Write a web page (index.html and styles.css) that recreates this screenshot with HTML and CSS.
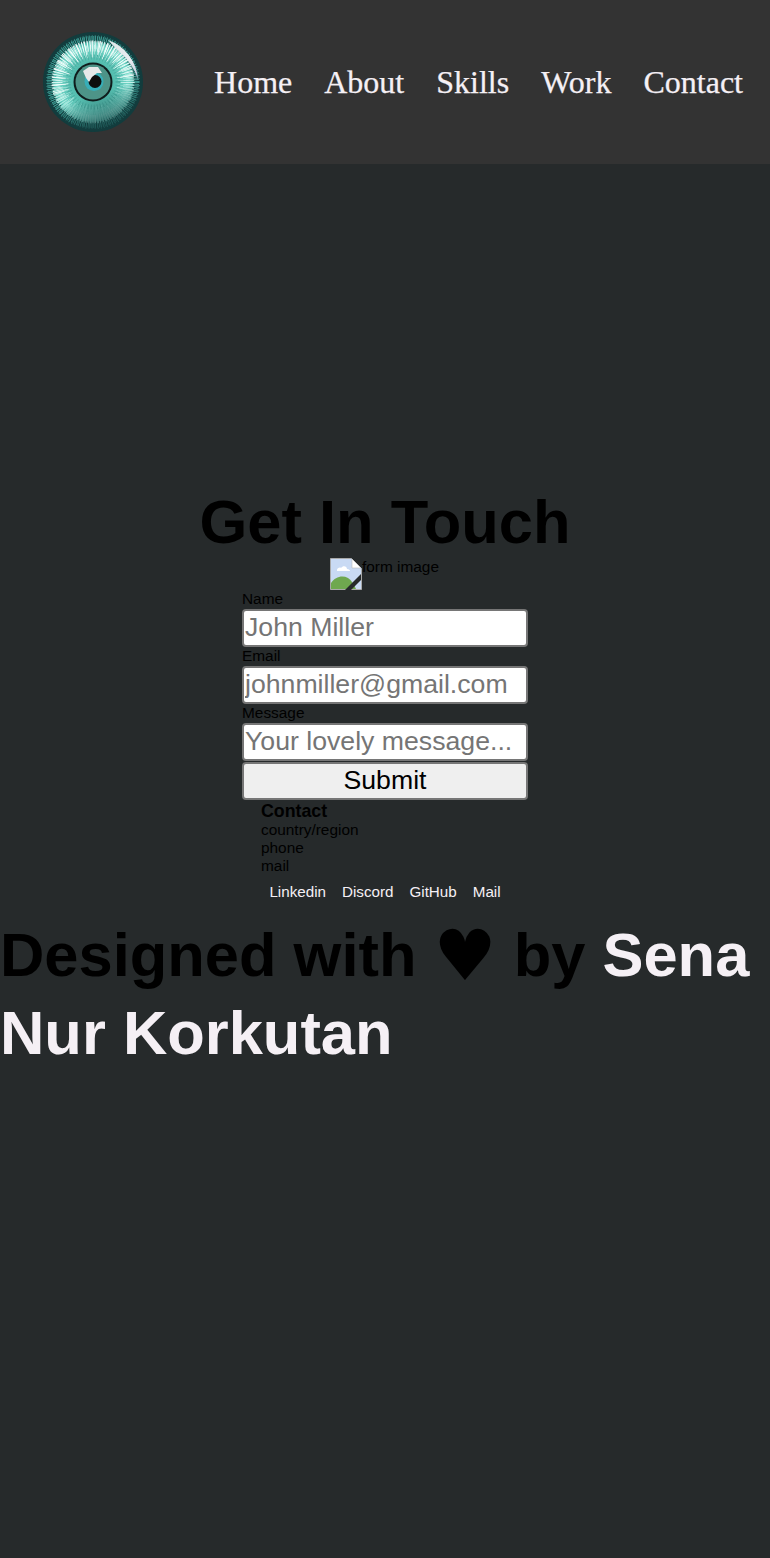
FILE: index.html
```html
<!DOCTYPE html>
<html lang="en">
<head>
<meta charset="utf-8">
<title>Sena Nur Korkutan</title>
<link rel="stylesheet" href="styles.css">
</head>
<body>
<header class="site-header">
  <a class="logo" href="#" aria-label="Home">
    <svg class="logo-svg" viewBox="0 0 100 100" width="100" height="100">
      <defs>
        <radialGradient id="iris" gradientUnits="userSpaceOnUse" cx="50" cy="50" r="44">
          <stop offset="0.4" stop-color="#4fb8aa"/>
          <stop offset="0.8" stop-color="#6ed3c5"/>
          <stop offset="1" stop-color="#3aa197"/>
        </radialGradient>
        <linearGradient id="whites" gradientUnits="userSpaceOnUse" x1="35" y1="5" x2="55" y2="90">
          <stop offset="0.1" stop-color="#ffffff"/>
          <stop offset="0.55" stop-color="#f4fffc"/>
          <stop offset="0.8" stop-color="#7fdccf"/>
        </linearGradient>
        <linearGradient id="shade" gradientUnits="userSpaceOnUse" x1="40" y1="50" x2="56" y2="100">
          <stop offset="0.3" stop-color="#123c3d" stop-opacity="0"/>
          <stop offset="0.9" stop-color="#123c3d" stop-opacity="0.7"/>
        </linearGradient>
        <linearGradient id="gloss" gradientUnits="userSpaceOnUse" x1="65" y1="8" x2="95" y2="48">
          <stop offset="0" stop-color="#dfe7e8"/>
          <stop offset="0.6" stop-color="#e8ebf0"/>
          <stop offset="1" stop-color="#b9bfd6"/>
        </linearGradient>
      </defs>
      <circle cx="50" cy="50" r="50" fill="#123c3d"/>
      <circle cx="50" cy="50" r="40" fill="url(#iris)"/>
      <circle cx="50" cy="50" r="42" fill="none" stroke="#4bb0a5" stroke-width="8" stroke-dasharray="0.7 1.1"/>
      <circle cx="50" cy="50" r="44" fill="none" stroke="#3b9c94" stroke-width="6" stroke-dasharray="0.6 2.3"/>
      <circle cx="50" cy="50" r="37" fill="none" stroke="#a5ece0" stroke-width="8" stroke-dasharray="0.9 1.5"/>
      <circle cx="50" cy="50" r="36" fill="none" stroke="url(#whites)" stroke-width="11" stroke-dasharray="0.7 1.9"/>
      <circle cx="50" cy="50" r="31" fill="none" stroke="url(#whites)" stroke-width="12" stroke-dasharray="0.4 3.1"/>
      <circle cx="50" cy="50" r="33" fill="none" stroke="url(#whites)" stroke-width="17" stroke-dasharray="0.8 5.9"/>
      <circle cx="50" cy="50" r="25" fill="none" stroke="#4aaea2" stroke-width="5" stroke-dasharray="1 2.1"/>
      <circle cx="50" cy="50" r="47" fill="url(#shade)"/>
      <path d="M65 8 A45 45 0 0 1 95 48 C93 40 88 32 82 25 C76 19 70 14 65 8Z" fill="url(#gloss)"/>
      <circle cx="50" cy="50" r="19.5" fill="#0f1c1c"/>
      <circle cx="50" cy="50" r="17.5" fill="#4d9488"/>
      <circle cx="51" cy="49.5" r="9.5" fill="#37aeb8"/>
      <circle cx="52" cy="49.5" r="6.5" fill="#0d0d0d"/>
      <path d="M40 39 L46 35 L55 35 L59 41 L54 41 L49 45 L46 50 L43 46 Z" fill="#e6e9e9"/>
    </svg>
  </a>
  <nav class="nav">
    <a href="#">Home</a>
    <a href="#">About</a>
    <a href="#">Skills</a>
    <a href="#">Work</a>
    <a href="#">Contact</a>
  </nav>
</header>
<main class="contact">
  <h1 class="title">Get In Touch</h1>
  <div class="form-image">
    <svg class="broken" viewBox="0 0 32 32" width="32" height="32">
      <path d="M0.5 0.5H21.5L31.5 10.5V31.5H0.5Z" fill="#c9daf4" stroke="#a9a9a9"/>
      <path d="M22 1L31 10H22Z" fill="#fff" stroke="#bbb" stroke-width="0.6"/>
      <path d="M7 12c0-2 3-3 4-2 2-3 6-2 6 1 2 0 3 1 3 2H7Z" fill="#fff"/>
      <path d="M1 31V25C5 19 12 17 18 20C21 22 24 26 26 31Z" fill="#6fa84f"/>
      <path d="M15 32L31 16V22L21 32Z" fill="#262a2b"/>
    </svg>
    <span class="alt">form image</span>
  </div>
  <form class="form">
    <label class="label" for="name">Name</label>
    <input class="field" id="name" type="text" placeholder="John Miller">
    <label class="label" for="email">Email</label>
    <input class="field" id="email" type="text" placeholder="johnmiller@gmail.com">
    <label class="label" for="message">Message</label>
    <input class="field" id="message" type="text" placeholder="Your lovely message...">
    <button class="submit" type="button">Submit</button>
  </form>
  <div class="info">
    <strong class="info-title">Contact</strong>
    <span>country/region</span>
    <span>phone</span>
    <span>mail</span>
  </div>
  <div class="links">
    <a href="#">Linkedin</a>
    <a href="#">Discord</a>
    <a href="#">GitHub</a>
    <a href="#">Mail</a>
  </div>
</main>
<footer class="credit">
  Designed with <span class="heart">♥</span> by <a href="#">Sena Nur Korkutan</a>
</footer>
</body>
</html>
```
FILE: styles.css
```css
* { box-sizing: border-box; }
html, body { margin: 0; padding: 0; }
body {
  background: #262a2b;
  color: #000;
  font-family: "Liberation Sans", Arial, sans-serif;
  min-height: 1558px;
}
a { text-decoration: none; color: inherit; }

.site-header {
  height: 164px;
  background: #333333;
  display: flex;
  align-items: center;
  justify-content: space-between;
  padding: 0 27px 0 43px;
}
.logo { display: block; height: 100px; }
.logo-svg { display: block; }
.nav {
  display: flex;
  gap: 32px;
  font-family: "Liberation Serif", "Times New Roman", serif;
  font-size: 32px;
  color: #f5f0f5;
  -webkit-text-stroke: 0.25px #f5f0f5;
}

.contact {
  display: flex;
  flex-direction: column;
  align-items: center;
  padding-top: 322px;
}
.title {
  margin: 0;
  font-size: 61.44px;
  line-height: 72px;
  font-weight: 700;
}
.form-image {
  display: flex;
  align-items: flex-start;
  padding-right: 1px;
  font-size: 15.4px;
  line-height: 18px;
}
.broken { display: block; }

.form {
  width: 286px;
  display: flex;
  flex-direction: column;
}
.label {
  font-size: 15.4px;
  line-height: 18px;
  padding-bottom: 1px;
}
.field, .submit {
  width: 100%;
  height: 38px;
  margin: 0;
  font-family: inherit;
  font-size: 26.67px;
  border: 2px solid #767676;
  border-radius: 4px;
}
.field {
  background: #fff;
  padding: 0 1px 2px;
}
.field::placeholder { color: #757575; opacity: 1; }
.submit {
  margin-top: 1px;
  padding: 0 2px 2px;
  background: #efefef;
  color: #000;
  text-align: center;
}

.info {
  width: 248px;
  margin-top: 1px;
  display: flex;
  flex-direction: column;
  font-size: 15.4px;
  line-height: 18px;
}
.info-title { font-size: 17.8px; line-height: 20px; }

.links {
  display: flex;
  gap: 16px;
  margin-top: 8px;
  font-size: 15.2px;
  line-height: 18px;
  color: #f5f0f5;
}

.credit {
  margin-top: 15px;
  font-size: 61.44px;
  line-height: 78px;
  font-weight: 700;
}
.credit a { color: #f5f0f5; }
.heart {
  font-family: "DejaVu Sans", sans-serif;
  font-size: 70.4px;
  font-weight: 400;
  line-height: 0;
  vertical-align: -4px;
}
```
